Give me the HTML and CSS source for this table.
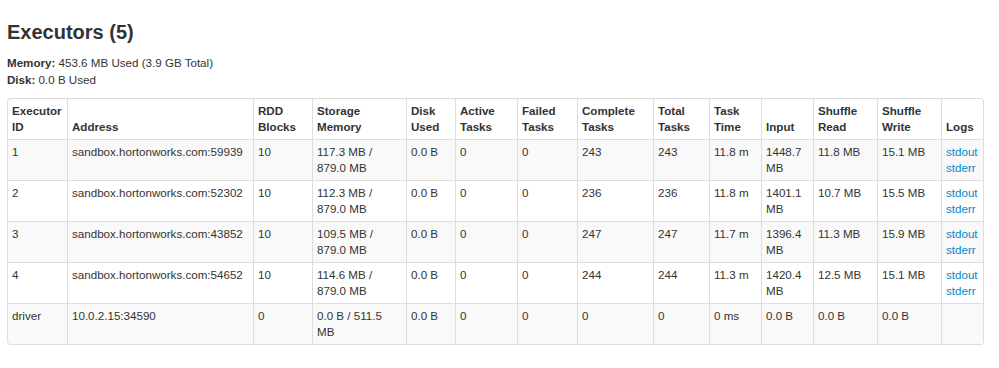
FILE: index.html
```html
<!DOCTYPE html>
<html>
<head>
<meta charset="utf-8">
<link rel="stylesheet" href="styles.css">
</head>
<body>
<div class="page">
  <h3 class="title">Executors (5)</h3>
  <ul class="summary">
    <li><strong>Memory:</strong> 453.6 MB Used (3.9 GB Total)</li>
    <li><strong>Disk:</strong> 0.0 B Used</li>
  </ul>
  <table class="execs">
    <colgroup>
      <col class="c-id"><col class="c-addr"><col class="c-rdd"><col class="c-mem"><col class="c-disk"><col class="c-active"><col class="c-failed"><col class="c-complete"><col class="c-total"><col class="c-time"><col class="c-input"><col class="c-sread"><col class="c-swrite"><col class="c-logs">
    </colgroup>
    <thead>
      <tr>
        <th>Executor ID</th><th>Address</th><th>RDD Blocks</th><th>Storage Memory</th><th>Disk Used</th><th>Active Tasks</th><th>Failed Tasks</th><th>Complete Tasks</th><th>Total Tasks</th><th>Task Time</th><th>Input</th><th>Shuffle Read</th><th>Shuffle Write</th><th>Logs</th>
      </tr>
    </thead>
    <tbody>
      <tr>
        <td>1</td><td>sandbox.hortonworks.com:59939</td><td>10</td><td>117.3 MB / 879.0 MB</td><td>0.0 B</td><td>0</td><td>0</td><td>243</td><td>243</td><td>11.8 m</td><td>1448.7 MB</td><td>11.8 MB</td><td>15.1 MB</td><td><a class="log" href="#">stdout</a><a class="log" href="#">stderr</a></td>
      </tr>
      <tr>
        <td>2</td><td>sandbox.hortonworks.com:52302</td><td>10</td><td>112.3 MB / 879.0 MB</td><td>0.0 B</td><td>0</td><td>0</td><td>236</td><td>236</td><td>11.8 m</td><td>1401.1 MB</td><td>10.7 MB</td><td>15.5 MB</td><td><a class="log" href="#">stdout</a><a class="log" href="#">stderr</a></td>
      </tr>
      <tr>
        <td>3</td><td>sandbox.hortonworks.com:43852</td><td>10</td><td>109.5 MB / 879.0 MB</td><td>0.0 B</td><td>0</td><td>0</td><td>247</td><td>247</td><td>11.7 m</td><td>1396.4 MB</td><td>11.3 MB</td><td>15.9 MB</td><td><a class="log" href="#">stdout</a><a class="log" href="#">stderr</a></td>
      </tr>
      <tr>
        <td>4</td><td>sandbox.hortonworks.com:54652</td><td>10</td><td>114.6 MB / 879.0 MB</td><td>0.0 B</td><td>0</td><td>0</td><td>244</td><td>244</td><td>11.3 m</td><td>1420.4 MB</td><td>12.5 MB</td><td>15.1 MB</td><td><a class="log" href="#">stdout</a><a class="log" href="#">stderr</a></td>
      </tr>
      <tr>
        <td>driver</td><td>10.0.2.15:34590</td><td>0</td><td>0.0 B / 511.5 MB</td><td>0.0 B</td><td>0</td><td>0</td><td>0</td><td>0</td><td>0 ms</td><td>0.0 B</td><td>0.0 B</td><td>0.0 B</td><td></td>
      </tr>
    </tbody>
  </table>
</div>
</body>
</html>
```
FILE: styles.css
```css
html, body {
  margin: 0;
  padding: 0;
  background: #fff;
}
body {
  font-family: "Liberation Sans", Arial, Helvetica, sans-serif;
  font-size: 11.6px;
  line-height: 17px;
  color: #333;
}
.page {
  padding: 20px 7px 0 7px;
}
.title {
  margin: 0;
  font-size: 20px;
  line-height: 24px;
  font-weight: bold;
  color: #333;
}
.summary {
  list-style: none;
  margin: 10px 0 10px 0;
  padding: 0;
}
.summary strong {
  font-weight: bold;
}
.execs {
  table-layout: fixed;
  width: 977px;
  border-collapse: separate;
  border-spacing: 0;
  border: 1px solid #ddd;
  border-left: 0;
  border-radius: 4px;
  font-size: 11.6px;
  line-height: 16px;
}
.execs th,
.execs td {
  padding: 4px 4px;
  border-left: 1px solid #ddd;
  border-top: 1px solid #ddd;
  text-align: left;
  overflow: hidden;
}
.execs th {
  border-top: 0;
  font-weight: bold;
  vertical-align: bottom;
}
.execs td {
  vertical-align: top;
  height: 32px;
}
.execs tbody tr:nth-child(odd) td {
  background: #f9f9f9;
}
.execs thead tr:first-child th:first-child {
  border-top-left-radius: 4px;
}
.execs tbody tr:last-child td:first-child {
  border-bottom-left-radius: 4px;
}
.c-id { width: 60px; }
.c-addr { width: 186px; }
.c-rdd { width: 59px; }
.c-mem { width: 94px; }
.c-disk { width: 49px; }
.c-active { width: 62px; }
.c-failed { width: 60px; }
.c-complete { width: 76px; }
.c-total { width: 56px; }
.c-time { width: 52px; }
.c-input { width: 52px; }
.c-sread { width: 64px; }
.c-swrite { width: 64px; }
.c-logs { width: 42px; }
.log {
  display: block;
  color: #0088cc;
  text-decoration: none;
}
```
